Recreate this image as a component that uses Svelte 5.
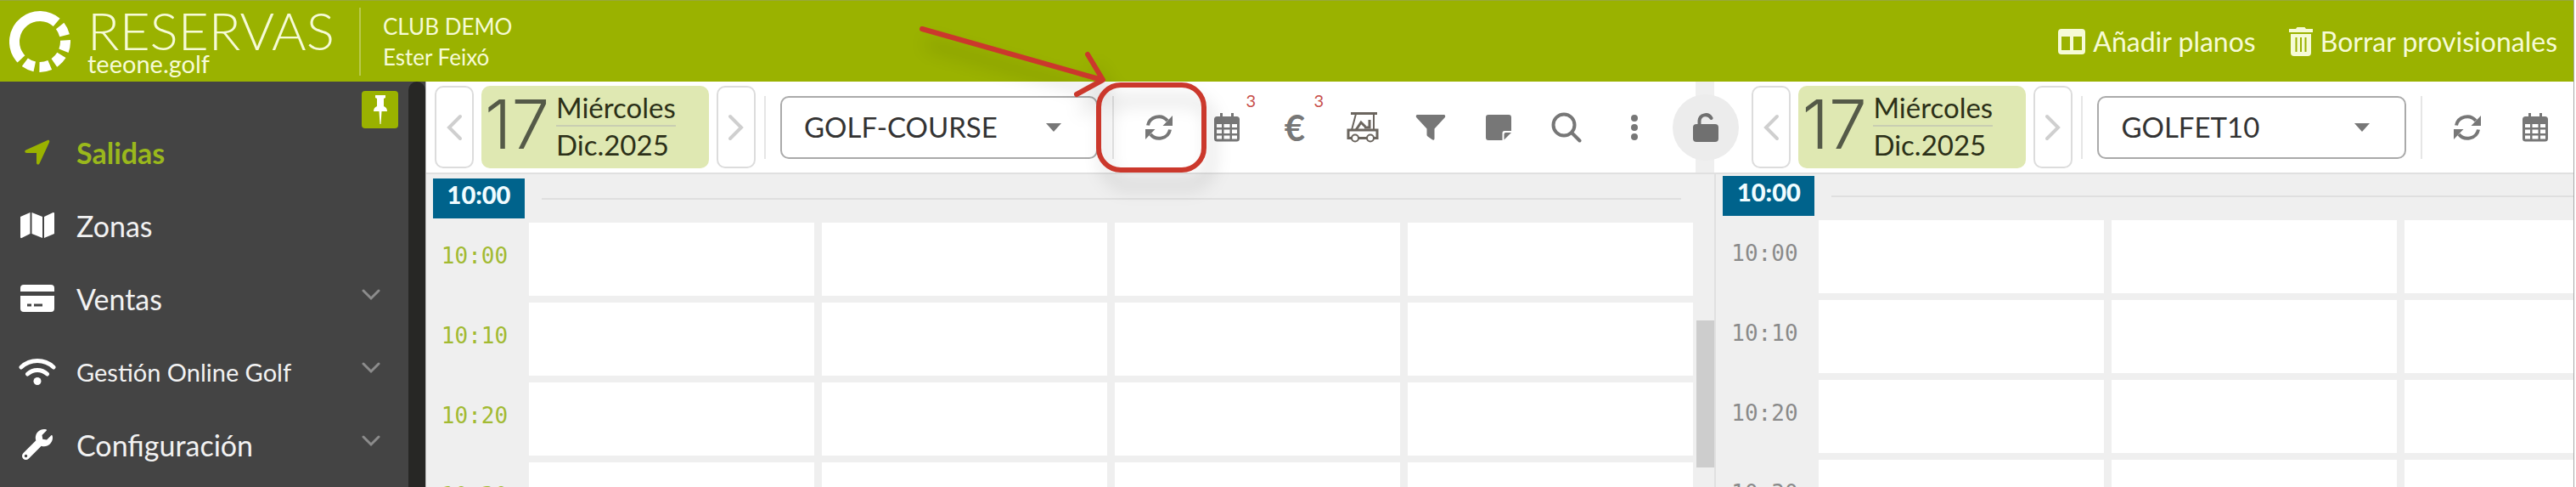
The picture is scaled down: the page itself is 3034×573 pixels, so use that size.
<script lang="ts">
  type Tool = { icon: string; label: string; count?: number };

  const menu = [
    { icon: 'arrow', label: 'Salidas', children: false },
    { icon: 'map', label: 'Zonas', children: false },
    { icon: 'card', label: 'Ventas', children: true },
    { icon: 'wifi', label: 'Gestión Online Golf', children: true },
    { icon: 'wrench', label: 'Configuración', children: true }
  ];

  const tools: Tool[] = [
    { icon: 'refresh', label: 'Actualizar' },
    { icon: 'calendar', label: 'Calendario', count: 3 },
    { icon: 'euro', label: 'Cobros', count: 3 },
    { icon: 'cart', label: 'Buggies' },
    { icon: 'filter', label: 'Filtrar' },
    { icon: 'note', label: 'Notas' },
    { icon: 'search', label: 'Buscar' },
    { icon: 'dots', label: 'Más opciones' }
  ];

  const panels = [
    { id: 'main', course: 'GOLF-COURSE', tools, side: false },
    {
      id: 'side',
      course: 'GOLFET10',
      tools: [
        { icon: 'refresh', label: 'Actualizar' },
        { icon: 'calendar', label: 'Calendario' }
      ] as Tool[],
      side: true
    }
  ];

  const courses = ['GOLF-COURSE', 'GOLFET10'];
  const times = ['10:00', '10:10', '10:20', '10:30'];
  const players = [1, 2, 3, 4];

  let active = 'Salidas';
  let locked = false;
</script>

{#snippet icon(name: string)}
  {#if name === 'arrow'}
    <svg width="30" height="30" viewBox="0 0 30 30" fill="currentColor"><path d="M27 1 1.500 12.500C-.5 13.500 0 16 2.500 16H14v11.500c0 2.500 2.700 2.800 3.600.8L29 3.500C29.800 1.500 28.500.2 27 1z" /></svg>
  {:else if name === 'map'}
    <svg width="42" height="32" viewBox="0 0 42 32" fill="currentColor"><path d="M1 6 12.500 1v25L2.500 31Q1 31.500 1 30zM14.500 1 27 6v25l-12.500-5zM29 6 39.500 1Q41 .5 41 2v24L29 31z" /></svg>
  {:else if name === 'card'}
    <svg width="42" height="34" viewBox="0 0 42 34" fill="currentColor"><path d="M1 9V5q0-4 4-4h32q4 0 4 4v4z" /><path fill-rule="evenodd" d="M1 14h40v15q0 4-4 4H5q-4 0-4-4zM9 23.500v3h5v-3zM17 23.500v3h10v-3z" /></svg>
  {:else if name === 'wifi'}
    <svg width="44" height="34" viewBox="0 0 44 34" fill="none" stroke="currentColor" stroke-width="5" stroke-linecap="round"><path d="M3 12a28 28 0 0 1 38 0M10.500 20a17 17 0 0 1 23 0" /><circle cx="22" cy="28.500" r="4.500" fill="currentColor" stroke="none" /></svg>
  {:else if name === 'wrench'}
    <svg width="36" height="36" viewBox="0 0 512 512" fill="currentColor"><path d="M507.730 109.100c-2.240-9.030-13.540-12.090-20.120-5.510l-74.360 74.360-67.880-11.310-11.310-67.880 74.360-74.360c6.620-6.620 3.430-17.900-5.660-20.160-47.380-11.740-99.550.91-136.580 37.930-39.640 39.640-50.550 97.100-34.050 147.200L18.740 402.760c-24.990 24.990-24.990 65.510 0 90.500 24.990 24.990 65.510 24.990 90.500 0l213.210-213.210c50.120 16.710 107.470 5.680 147.370-34.220 37.070-37.070 49.700-89.320 37.910-136.730zM64 472c-13.250 0-24-10.750-24-24 0-13.260 10.750-24 24-24s24 10.740 24 24c0 13.250-10.750 24-24 24z" /></svg>
  {:else if name === 'refresh'}
    <svg width="34" height="32" viewBox="0 0 34 32" fill="none" stroke="currentColor" stroke-width="4"><path d="M4 13.500A13 12.500 0 0 1 27 8M30 18.500A13 12.500 0 0 1 7 24" /><path d="M33 2v12H21.500zM1 30V18h11.500z" fill="currentColor" stroke="none" /></svg>
  {:else if name === 'calendar'}
    <svg width="32" height="36" viewBox="0 0 32 36" fill="currentColor"><path fill-rule="evenodd" d="M8 1h3v4h10V1h3v4h3.500q3.500 0 3.500 3.500V31q0 3.500-3.500 3.500h-23Q1 34.500 1 31V8.500Q1 5 4.500 5H8zM4 14v4h6v-4zM12.500 14v4h7v-4zM22 14v4h6v-4zM4 20.500v4.500h6v-4.500zM12.500 20.500v4.500h7v-4.500zM22 20.500v4.500h6v-4.500zM4 27.500v4h6v-4zM12.500 27.500v4h7v-4zM22 27.500v4h6v-4z" /></svg>
  {:else if name === 'euro'}
    <span class="euro">€</span>
  {:else if name === 'cart'}
    <svg width="38" height="38" viewBox="0 0 38 38" fill="none" stroke="#6b655e" stroke-width="2"><path d="M5 2.500h31" stroke-width="3" /><path d="M11 3 6 22M32 3v19" /><path d="m11 22 6-9 5 5M21 19h6v-9" stroke-width="3" /><path d="M6 31.500H2V22h34v9.500h-4M14 31.500h10" stroke-width="3" /><circle cx="10" cy="31.500" r="4" /><circle cx="28" cy="31.500" r="4" /></svg>
  {:else if name === 'filter'}
    <svg width="36" height="32" viewBox="0 0 36 32" fill="currentColor"><path d="M2.500 1h31c1.800 0 2.300 2 1.200 3.200L22.500 17.500V29c0 1.800-1.500 2.200-2.700 1.300l-5-3.600c-.8-.6-1.300-1.400-1.300-2.300v-6.900L1.300 4.200C.2 3 .7 1 2.500 1z" /></svg>
  {:else if name === 'note'}
    <svg width="32" height="32" viewBox="0 0 32 32" fill="currentColor"><path d="M4 1h24q3 0 3 3v16h-8q-2.500 0-2.500 2.500V31H4q-3 0-3-3V4q0-3 3-3z" /><path d="M22.500 30.500V24q0-2 2-2h6.500z" /></svg>
  {:else if name === 'search'}
    <svg width="36" height="36" viewBox="0 0 36 36" fill="none" stroke="currentColor" stroke-width="4" stroke-linecap="round"><circle cx="15" cy="15" r="12.500" /><path d="m24.500 24.500 9 9" /></svg>
  {:else if name === 'dots'}
    <svg width="10" height="32" viewBox="0 0 10 32" fill="currentColor"><circle cx="5" cy="5" r="4" /><circle cx="5" cy="16" r="4" /><circle cx="5" cy="27" r="4" /></svg>
  {:else if name === 'lock'}
    <svg width="32" height="36" viewBox="0 0 32 36"><rect x="1" y="14" width="30" height="21" rx="4" fill="currentColor" /><path d="M8.500 15V10a7.500 7.500 0 0 1 14-3" fill="none" stroke="currentColor" stroke-width="4" stroke-linecap="round" /></svg>
  {:else if name === 'columns'}
    <svg width="34" height="32" viewBox="0 0 34 32" fill="currentColor"><path fill-rule="evenodd" d="M5 1h24q4 0 4 4v22q0 4-4 4H5q-4 0-4-4V5q0-4 4-4zM5 10v16h10V10zM19 10v16h10V10z" /></svg>
  {:else if name === 'trash'}
    <svg width="30" height="36" viewBox="0 0 30 36"><path d="M1 3h8l1.500-2h9L21 3h8v4H1z" fill="currentColor" /><path d="M3 9h24v22q0 4-4 4H7q-4 0-4-4z" fill="currentColor" /><path d="M9.500 13v17M15 13v17M20.500 13v17" stroke="#9ab200" stroke-width="2" /></svg>
  {:else if name === 'pin'}
    <svg width="18" height="36" viewBox="0 0 18 36" fill="currentColor"><path d="M3 1h12v3l-2 1v9q4 1.500 4 6h-6.500L9.500 35h-1L7.500 20H1q0-4.500 4-6V5L3 4z" /></svg>
  {/if}
{/snippet}

<div class="app">
  <header class="topbar">
    <svg class="logo" width="72" height="74" viewBox="0 0 72 74" aria-hidden="true">
      <circle cx="36" cy="37" r="30" pathLength="360" fill="none" stroke="#fff" stroke-width="12" stroke-dasharray="24 11 24 11 24 11 24 11 24 11 174 11" transform="rotate(-38 36 37)" />
    </svg>
    <div class="brand">
      <span class="brand-name">RESERVAS</span>
      <span class="brand-site">teeone.golf</span>
    </div>
    <div class="account">
      <span>CLUB DEMO</span>
      <span>Ester Feixó</span>
    </div>
    <nav class="top-actions">
      <button type="button">{@render icon('columns')}Añadir planos</button>
      <button type="button">{@render icon('trash')}Borrar provisionales</button>
    </nav>
  </header>

  <div class="layout">
    <aside class="sidebar">
      <div class="menu">
        <button type="button" class="pin" aria-label="Fijar menú">{@render icon('pin')}</button>
        <nav>
          {#each menu as item}
            <button
              type="button"
              class="menu-item"
              class:active={active === item.label}
              class:long={item.label.length > 16}
              on:click={() => (active = item.label)}
            >
              <span class="menu-icon">{@render icon(item.icon)}</span>
              <span class="menu-label">{item.label}</span>
              {#if item.children}
                <svg class="chevron" width="22" height="14" viewBox="0 0 22 14"><path d="m2 2 9 9 9-9" fill="none" stroke="#8c8c8c" stroke-width="3" stroke-linecap="round" /></svg>
              {/if}
            </button>
          {/each}
        </nav>
      </div>
      <div class="menu-scroll"></div>
    </aside>

    <main class="workspace">
      {#each panels as panel}
        <section class="panel" class:side={panel.side}>
          <div class="toolbar">
            <div class="date-nav">
              <button type="button" class="step" aria-label="Día anterior">
                <svg width="20" height="32" viewBox="0 0 20 32"><path d="M17 3 4 16l13 13" /></svg>
              </button>
              <button type="button" class="date">
                <span class="day">17</span>
                <span class="date-text">
                  <span class="weekday">Miércoles</span>
                  <span class="month">Dic.2025</span>
                </span>
              </button>
              <button type="button" class="step" aria-label="Día siguiente">
                <svg width="20" height="32" viewBox="0 0 20 32"><path d="m3 3 13 13L3 29" /></svg>
              </button>
            </div>
            <div class="course">
              <select aria-label="Recorrido" value={panel.course}>
                {#each courses as course}
                  <option value={course}>{course}</option>
                {/each}
              </select>
              <svg class="caret" width="18" height="10" viewBox="0 0 18 10"><path d="M0 0h18l-9 10z" fill="#777" /></svg>
            </div>
            <div class="tools">
              {#each panel.tools as tool}
                <button type="button" class="tool" aria-label={tool.label}>
                  {@render icon(tool.icon)}
                  {#if tool.count}
                    <span class="count">{tool.count}</span>
                  {/if}
                </button>
              {/each}
            </div>
            {#if !panel.side}
              <div class="gutter"></div>
            {/if}
          </div>

          <div class="schedule">
            <div class="schedule-main">
              <div class="hour">
                <span class="hour-tag">10:00</span>
                <span class="hour-line"></span>
              </div>
              <div class="rows">
                {#each times as time}
                  <div class="row">
                    <span class="time">{time}</span>
                    {#each players as player}
                      <button type="button" class="slot" aria-label="{time}, jugador {player}"></button>
                    {/each}
                  </div>
                {/each}
              </div>
            </div>
            {#if !panel.side}
              <div class="scroll-track"><div class="scroll-thumb"></div></div>
            {/if}
          </div>

          {#if panel.side}
            <button type="button" class="lock" aria-label="Bloquear planos" aria-pressed={locked} on:click={() => (locked = !locked)}>
              {@render icon('lock')}
            </button>
          {:else}
            <svg class="callout" width="400" height="260" viewBox="0 0 400 260" aria-hidden="true">
              <g fill="none" stroke="#cb382c" stroke-width="6" stroke-linecap="round" stroke-linejoin="round">
                <path d="m26 34 212 60M221 64l18 30-31 17" />
                <rect x="234" y="100" width="124" height="100" rx="26" />
              </g>
            </svg>
          {/if}
        </section>
      {/each}
    </main>
  </div>
</div>

<style>
  :global(body) {
    background: #fff;
  }

  .app {
    display: flex;
    flex-direction: column;
    height: 100vh;
    margin-right: 2px;
    border-right: 1px solid #a8a8a8;
    box-sizing: border-box;
    overflow: hidden;
    font-family: Lato, sans-serif;
    color: #333;
  }

  button {
    margin: 0;
    padding: 0;
    border: 0;
    background: none;
    font: inherit;
    color: inherit;
    cursor: pointer;
  }

  svg {
    display: block;
    flex-shrink: 0;
  }

  /* Top bar */
  .topbar {
    display: flex;
    align-items: center;
    flex-shrink: 0;
    height: 96px;
    padding: 0 19px 0 11px;
    box-sizing: border-box;
    border-top: 1px solid #98a83c;
    background: #9ab200;
    color: #f6fbd6;
  }

  .brand {
    display: flex;
    flex-direction: column;
    width: 320px;
    margin-left: 20px;
    border-right: 2px solid #b9ca4c;
  }

  .brand-name {
    font-size: 62px;
    font-weight: 300;
    line-height: 52px;
  }

  .brand-site {
    font-size: 29px;
    font-weight: 400;
    line-height: 28px;
  }

  .account {
    display: flex;
    flex-direction: column;
    margin-left: 26px;
    font-size: 26px;
    line-height: 36px;
  }

  .top-actions {
    display: flex;
    gap: 38px;
    margin-left: auto;
  }

  .top-actions button {
    display: flex;
    align-items: center;
    gap: 8px;
    font-size: 32px;
    line-height: 36px;
  }

  .layout {
    display: flex;
    flex: 1;
    min-height: 0;
  }

  /* Sidebar */
  .sidebar {
    display: flex;
    flex: 0 0 502px;
    box-sizing: border-box;
    border-right: 1px solid #bbb;
    background: #444;
    color: #f2f2f2;
  }

  .menu {
    display: flex;
    flex: 1;
    flex-direction: column;
    padding-top: 11px;
  }

  .pin {
    display: flex;
    align-items: center;
    justify-content: center;
    align-self: flex-end;
    width: 43px;
    height: 44px;
    margin-right: 12px;
    border-radius: 4px;
    background: #9ab200;
    color: #fff;
  }

  .menu nav {
    display: flex;
    flex-direction: column;
    margin-top: -15px;
  }

  .menu-item {
    display: flex;
    align-items: center;
    height: 86px;
    padding: 0 33px 0 20px;
    font-size: 34px;
    text-align: left;
  }

  .menu-item.active {
    color: #9ab81c;
    font-weight: 700;
  }

  .menu-item.long {
    font-size: 29px;
  }

  .menu-icon {
    display: flex;
    justify-content: center;
    width: 48px;
    margin-right: 22px;
    color: #fff;
  }

  .active .menu-icon {
    color: #9ab200;
  }

  .menu-label {
    flex: 1;
  }

  .chevron {
    margin-bottom: 8px;
  }

  .menu-scroll {
    width: 20px;
    border-radius: 10px 10px 0 0;
    background: #272725;
  }

  /* Panels */
  .workspace {
    display: flex;
    flex: 1;
    min-width: 0;
    background: #efefef;
  }

  .panel {
    position: relative;
    display: flex;
    flex: 3 1 0;
    flex-direction: column;
    min-width: 0;
  }

  .panel.side {
    flex-grow: 2;
  }

  .toolbar {
    display: flex;
    align-items: center;
    flex-shrink: 0;
    height: 109px;
    padding-left: 10px;
    box-sizing: border-box;
    border-bottom: 2px solid #e0e0e0;
    background: #fff;
  }

  .side .toolbar {
    padding-left: 44px;
  }

  .date-nav {
    display: flex;
    gap: 9px;
    height: 97px;
  }

  .step {
    display: flex;
    align-items: center;
    justify-content: center;
    width: 46px;
    box-sizing: border-box;
    border: 2px solid #dcdcdc;
    border-radius: 10px;
    background: #fff;
  }

  .step path {
    fill: none;
    stroke: #cfcfcf;
    stroke-width: 4;
    stroke-linecap: round;
  }

  .date {
    display: flex;
    align-items: center;
    gap: 14px;
    width: 268px;
    padding-left: 4px;
    border-radius: 10px;
    background: #dfe8b2;
    text-align: left;
  }

  .day {
    width: 70px;
    color: #555a48;
    font-family: Inter, sans-serif;
    font-size: 80px;
    font-weight: 300;
    line-height: 80px;
    padding-bottom: 8px;
  }

  .date-text {
    display: flex;
    flex-direction: column;
    padding-bottom: 4px;
    color: #2c3018;
    font-size: 33px;
    line-height: 42px;
  }

  .weekday {
    border-bottom: 2px solid #c9ceb2;
  }

  .course {
    position: relative;
    display: flex;
    margin-left: 10px;
    padding: 0 17px;
    border: solid #e6e6e6;
    border-width: 0 2px;
  }

  select {
    width: 374px;
    height: 74px;
    padding: 0 26px 2px;
    border: 2px solid #aaa;
    border-radius: 10px;
    background: #fff;
    color: #333;
    font: inherit;
    font-size: 33px;
    appearance: none;
  }

  .side select {
    width: 364px;
  }

  .caret {
    position: absolute;
    top: 32px;
    right: 60px;
    pointer-events: none;
  }

  .tools {
    display: flex;
    margin-left: 13px;
    color: #777;
  }

  .tool {
    position: relative;
    display: flex;
    align-items: center;
    justify-content: center;
    width: 80px;
    height: 76px;
  }

  .euro {
    font-size: 42px;
    font-weight: 700;
    line-height: 42px;
  }

  .count {
    position: absolute;
    top: -6px;
    right: 6px;
    color: #c8504c;
    font-size: 20px;
    line-height: 24px;
  }

  .gutter {
    align-self: stretch;
    width: 22px;
    margin-left: auto;
    background: #efefef;
  }

  /* Tee sheet */
  .schedule {
    display: flex;
    flex: 1;
    min-height: 0;
    overflow: hidden;
  }

  .side .schedule {
    border-left: 2px solid #e0e0e0;
  }

  .schedule-main {
    flex: 1;
    min-width: 0;
    padding: 5px 4px 0 8px;
  }

  .side .schedule-main {
    padding: 2px 0 0 8px;
  }

  .hour {
    display: flex;
    align-items: center;
    gap: 20px;
    margin: 0 14px 5px 0;
  }

  .hour-tag {
    width: 108px;
    height: 47px;
    background: #00638c;
    color: #f0fcff;
    font-size: 29px;
    font-weight: 900;
    line-height: 37px;
    text-align: center;
  }

  .hour-line {
    flex: 1;
    height: 2px;
    background: #dfdfdf;
  }

  .side .hour {
    margin-right: 0;
  }

  .rows {
    display: grid;
    gap: 8px;
  }

  .row {
    display: grid;
    grid-template-columns: 104px repeat(4, minmax(336px, 1fr));
    gap: 9px;
    height: 86px;
  }

  .time {
    padding-right: 6px;
    color: #a2ba32;
    font-family: 'DejaVu Sans Mono', monospace;
    font-size: 26px;
    line-height: 78px;
    text-align: center;
  }

  .side .time {
    color: #8a8a8a;
  }

  .slot {
    background: #fff;
  }

  .scroll-track {
    width: 21px;
    padding-top: 172px;
  }

  .scroll-thumb {
    height: 173px;
    background: #cdcdcd;
  }

  .lock {
    position: absolute;
    top: 15px;
    left: -49px;
    display: flex;
    align-items: center;
    justify-content: center;
    width: 78px;
    height: 78px;
    border-radius: 50%;
    background: #ececec;
    color: #707070;
  }

  /* Arrow and box that point at the refresh button */
  .callout {
    position: absolute;
    top: -96px;
    left: 558px;
    filter: drop-shadow(8px 18px 10px rgba(0, 0, 0, 0.2));
    pointer-events: none;
  }
</style>
